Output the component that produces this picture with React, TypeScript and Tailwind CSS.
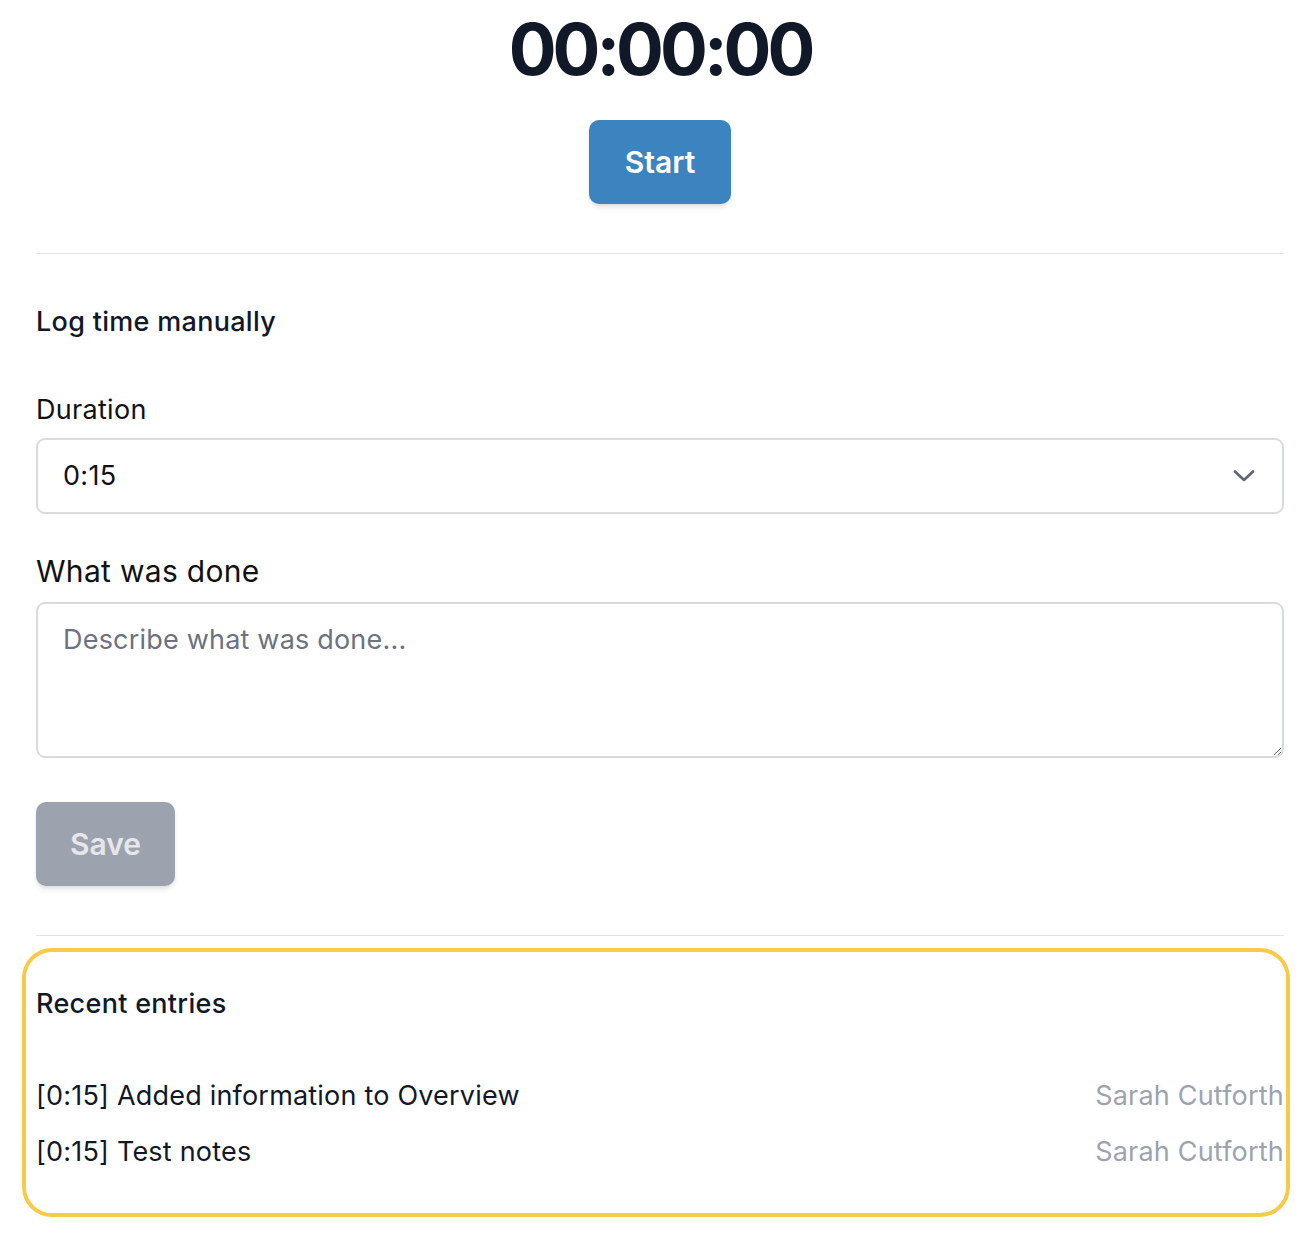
import React from "react";

export default function App() {
  return (
    <div
      className="min-h-[1250px] bg-white pl-[36px] pr-[24px] text-[#111827]"
      style={{ fontFamily: "Inter, 'Noto Sans', sans-serif" }}
    >
      <div className="flex flex-col items-center pt-[13px]">
        <div className="text-[71px] leading-[72px] font-bold tracking-[-4px] text-[#111827]">
          00:00:00
        </div>
        <button className="mt-[35px] h-[84px] w-[142px] rounded-[10px] bg-[#3c84c0] text-[30px] font-semibold text-white shadow-md">
          Start
        </button>
      </div>

      <div className="mt-[49px] h-px bg-[#e2e4e8]" />

      <div className="mt-[48px] text-[27px] leading-[40px] font-medium tracking-[0.3px] text-[#111827]">
        Log time manually
      </div>

      <div className="mt-[48px] text-[27px] leading-[40px] tracking-[0.3px] text-[#111111]">Duration</div>
      <div className="mt-[8px] flex h-[76px] items-center justify-between rounded-[9px] border-2 border-[#d8dbe0] pl-[25px] pr-[27px]">
        <span className="text-[27px] leading-[40px] tracking-[0.3px] text-[#111111]">0:15</span>
        <svg width="22" height="14" viewBox="0 0 22 14" fill="none">
          <path d="M2 2.5 L11 11 L20 2.5" stroke="#5f6673" strokeWidth="2.6" strokeLinecap="round" strokeLinejoin="round" />
        </svg>
      </div>

      <div className="mt-[35px] text-[30px] leading-[44px] tracking-[0.3px] text-[#111111]">What was done</div>
      <textarea
        className="mt-[9px] block h-[156px] w-full rounded-[9px] border-2 border-[#d8dbe0] px-[25px] py-[16px] text-[27px] leading-[40px] tracking-[0.2px] text-[#111111] outline-none placeholder:text-[#6b7280]"
        placeholder="Describe what was done..."
      />

      <button className="mt-[44px] h-[84px] w-[139px] rounded-[10px] bg-[#9ca3af] text-[30px] font-semibold text-[#e5e7eb] shadow-md">
        Save
      </button>

      <div className="mt-[49px] h-px bg-[#e2e4e8]" />

      <div className="mt-[12px] -ml-[14px] -mr-[6px] rounded-[30px] border-4 border-[#f8ca48] pl-[10px] pr-[2px] pt-[32px] pb-[41px]">
        <div className="text-[27px] leading-[40px] font-medium tracking-[0.3px] text-[#111827]">Recent entries</div>
        <div className="mt-[52px] flex flex-col gap-[16px]">
          <div className="flex items-center justify-between text-[27px] leading-[40px] tracking-[0.2px]">
            <span className="text-[#111827]">[0:15] Added information to Overview</span>
            <span className="text-[#9ca3af]">Sarah Cutforth</span>
          </div>
          <div className="flex items-center justify-between text-[27px] leading-[40px] tracking-[0.2px]">
            <span className="text-[#111827]">[0:15] Test notes</span>
            <span className="text-[#9ca3af]">Sarah Cutforth</span>
          </div>
        </div>
      </div>
    </div>
  );
}
